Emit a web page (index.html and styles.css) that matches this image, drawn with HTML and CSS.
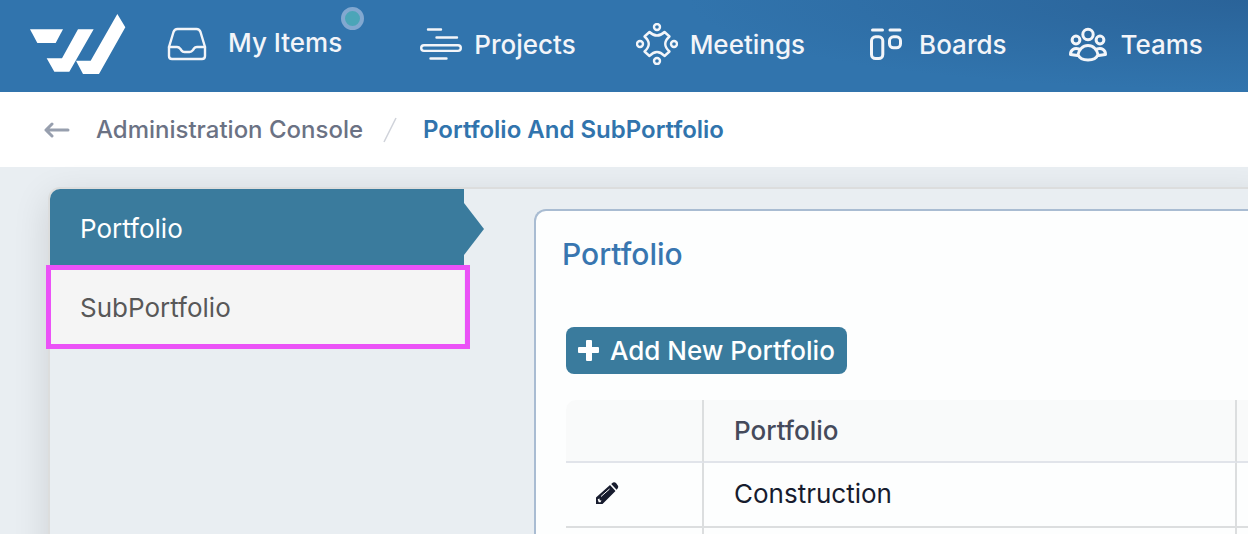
FILE: index.html
```html
<!DOCTYPE html>
<html lang="en">
<head>
    <meta charset="UTF-8">
    <meta name="viewport" content="width=device-width, initial-scale=1.0">
    <title>Portfolio And SubPortfolio</title>
    <link rel="stylesheet" href="styles.css">
</head>
<body>
    <header>
        <a href="#" class="logo" aria-label="Home">
            <svg width="96" height="60" viewBox="0 0 288 180" fill="#fff">
                <path d="M0 46H99L77 87H22Z"/>
                <path d="M144 46H191L118 173H73L50 133H96Z"/>
                <path d="M262 0L286 40L207 180H159L138 140H182Z"/>
            </svg>
        </a>
        <nav>
            <a href="#" class="nav-item my-items">
                <svg class="nav-icon" viewBox="0 0 42 42">
                    <path d="M3 24L7.500 9Q8.500 6 11.500 6H30.500Q33.500 6 34.500 9L39 24V33Q39 36 36 36H6Q3 36 3 33Z"/>
                    <path d="M3 24H11Q13 24 14.500 26L15.500 27.500Q16.500 29 18.500 29H23.500Q25.500 29 27 27L28 25.500Q29 24 31 24H39"/>
                </svg>
                <span>My Items</span>
                <span class="badge"></span>
            </a>
            <a href="#" class="nav-item">
                <svg class="nav-icon" viewBox="0 0 42 42">
                    <path d="M8 6.500H21M16.500 14.500H37M10.500 35.500H26.500"/>
                    <rect x="1.200" y="22.300" width="39.600" height="5.600" rx="2.800"/>
                </svg>
                <span>Projects</span>
            </a>
            <a href="#" class="nav-item">
                <svg class="nav-icon" viewBox="0 0 42 42">
                    <circle cx="21" cy="4" r="3"/>
                    <circle cx="4" cy="21" r="3"/>
                    <circle cx="38" cy="21" r="3"/>
                    <circle cx="21" cy="38" r="3"/>
                    <path d="M13.500 9Q21 16 28.500 9L33.500 13.500Q25 21 33.500 28.500L28.500 33Q21 25 13.500 33L8.500 28.500Q17 21 8.500 13.500Z"/>
                </svg>
                <span>Meetings</span>
            </a>
            <a href="#" class="nav-item">
                <svg class="nav-icon bold" viewBox="0 0 42 42">
                    <path d="M7.500 7H17.500M25 7H35"/>
                    <rect x="6.500" y="13.800" width="11.300" height="21.700" rx="4"/>
                    <rect x="24.500" y="13.800" width="11" height="11" rx="4"/>
                </svg>
                <span>Boards</span>
            </a>
            <a href="#" class="nav-item">
                <svg class="nav-icon bold" viewBox="0 0 42 42">
                    <circle cx="21" cy="11.500" r="5.200"/>
                    <circle cx="9" cy="17" r="3.900"/>
                    <circle cx="33" cy="17" r="3.900"/>
                    <path d="M21 22.500C26.500 22.500 30 27 31 31.500C29.500 35.500 25 37 21 37C17 37 12.500 35.500 11 31.500C12 27 15.500 22.500 21 22.500Z"/>
                    <path d="M12 26C7 24.500 3.500 27 3.500 31.500L10.500 32.500"/>
                    <path d="M30 26C35 24.500 38.500 27 38.500 31.500L31.500 32.500"/>
                </svg>
                <span>Teams</span>
            </a>
        </nav>
    </header>

    <div class="breadcrumb">
        <a href="#" class="back" aria-label="Back">
            <svg width="26" height="18" viewBox="0 0 26 18">
                <path d="M8 3L2 9L8 15M2 9H24"/>
            </svg>
        </a>
        <a href="#" class="crumb">Administration Console</a>
        <svg class="slash" width="14" height="26" viewBox="0 0 14 26">
            <path d="M1 25L13 1"/>
        </svg>
        <span class="crumb current">Portfolio And SubPortfolio</span>
    </div>

    <main class="container">
        <aside class="sidebar">
            <a href="#" class="side-item active">Portfolio</a>
            <a href="#" class="side-item highlighted">SubPortfolio</a>
        </aside>

        <section class="card">
            <h2>Portfolio</h2>
            <button type="button" class="add-button">
                <svg width="22" height="22" viewBox="0 0 22 22" fill="#fff">
                    <path d="M9 0H13Q14 0 14 1V7H20Q21 7 21 8V12Q21 13 20 13H14V20Q14 21 13 21H9Q8 21 8 20V13H1Q0 13 0 12V8Q0 7 1 7H8V1Q8 0 9 0Z"/>
                </svg>
                Add New Portfolio
            </button>
            <table>
                <thead>
                    <tr>
                        <th class="edit-col"></th>
                        <th class="name-col">Portfolio</th>
                        <th></th>
                    </tr>
                </thead>
                <tbody>
                    <tr>
                        <td>
                            <button type="button" class="edit-button" aria-label="Edit Construction">
                                <svg width="24" height="24" viewBox="0 0 24 24">
                                    <path fill="#171c2e" d="M0 22V15.500L14 3L19.500 9L6.500 22ZM15.200 2L17 .500Q18.500 -.300 20 1L21.800 3.500Q22.800 5 21.600 6.400L20.600 7.800Z"/>
                                    <path stroke="#fff" d="M5 14.500L13.500 7"/>
                                    <path fill="#fff" d="M1.700 17.200L3.500 16.500L3.700 18.300L5.500 18.600L4.500 20.300L2.700 20.300Z"/>
                                </svg>
                            </button>
                        </td>
                        <td>Construction</td>
                        <td></td>
                    </tr>
                    <tr>
                        <td></td>
                        <td></td>
                        <td></td>
                    </tr>
                </tbody>
            </table>
        </section>
    </main>
</body>
</html>
```
FILE: styles.css
```css
* {
    box-sizing: border-box;
}

body {
    margin: 0;
    height: 100vh;
    overflow: hidden;
    display: flex;
    flex-direction: column;
    font-family: Inter, sans-serif;
    font-size: 26px;
    background-color: #e9eef2;
    color: #171c2e;
}

a {
    color: inherit;
    text-decoration: none;
}

button {
    font: inherit;
    border: none;
    cursor: pointer;
}

svg {
    display: block;
    flex: none;
}

/* Top bar */
header {
    flex: none;
    height: 92px;
    padding: 0 30px;
    display: flex;
    align-items: center;
    gap: 40px;
    background: radial-gradient(ellipse 560px 90px at 100% 0, #2a6399, #3174ad);
    color: #f3f5f9;
    font-weight: 500;
}

.logo {
    margin-bottom: 4px;
}

nav {
    display: flex;
    gap: 60px;
    padding-bottom: 2px;
    white-space: nowrap;
}

.nav-item {
    display: flex;
    align-items: center;
    gap: 12px;
    padding-bottom: 2px;
}

.nav-icon {
    width: 42px;
    height: 42px;
    fill: none;
    stroke: #f3f5f9;
    stroke-width: 2.4;
    stroke-linecap: round;
    stroke-linejoin: round;
}

.nav-icon.bold {
    stroke-width: 3;
}

.my-items {
    position: relative;
    gap: 20px;
    padding-right: 18px;
}

.my-items span {
    padding-bottom: 4px;
}

.badge {
    position: absolute;
    top: -16px;
    right: -4px;
    width: 23px;
    height: 23px;
    border: 4px solid #82a8d0;
    border-radius: 50%;
    background-color: #4ba5b8;
}

/* Breadcrumb */
.breadcrumb {
    flex: none;
    height: 75px;
    padding: 0 44px;
    display: flex;
    align-items: center;
    gap: 26px;
    background-color: #fff;
}

.back svg {
    fill: none;
    stroke: #979fae;
    stroke-width: 3;
    stroke-linecap: round;
    stroke-linejoin: round;
}

.slash {
    margin-left: -6px;
    stroke: #d0d3da;
    stroke-width: 1.5;
}

.crumb {
    font-size: 24px;
    font-weight: 500;
    color: #6b7284;
}

.crumb.current {
    font-weight: 600;
    color: #3174ad;
}

/* Content */
.container {
    flex: 1 0 auto;
    margin: 20px -20px -20px 48px;
    display: flex;
    align-items: flex-start;
    gap: 70px;
    border: 2px solid #dcdddd;
    border-radius: 12px;
    background-color: #e9eef2;
    box-shadow: 0 10px 36px rgba(0, 0, 0, 0.12);
}

.sidebar {
    flex: 0 0 414px;
}

.side-item {
    position: relative;
    display: flex;
    align-items: center;
    height: 79px;
    padding: 0 30px;
    background-color: #f5f5f5;
    color: #585858;
}

.side-item.active {
    border-top-left-radius: 10px;
    background-color: #3a7b9d;
    color: #fff;
}

.side-item.active::after {
    content: "";
    position: absolute;
    top: 14px;
    left: 100%;
    border: 26px solid transparent;
    border-left: 20px solid #3a7b9d;
    border-right: none;
}

.side-item.highlighted::after {
    content: "";
    position: absolute;
    inset: -3px -6px -2px -4px;
    border: 5px solid #eb52f7;
}

.card {
    flex: 1;
    min-width: 0;
    margin-top: 20px;
    padding: 25px 0 0 30px;
    border: 2px solid #a9bcd2;
    border-right: none;
    border-top-left-radius: 12px;
    background-color: #fdfefe;
}

h2 {
    margin: 0 0 55px -4px;
    font-size: 30px;
    font-weight: 500;
    line-height: 36px;
    color: #3876b0;
}

.add-button {
    display: flex;
    align-items: center;
    gap: 10px;
    height: 47px;
    margin-bottom: 26px;
    padding: 0 12px;
    border-radius: 8px;
    background-color: #3a7b9d;
    color: #fff;
    font-weight: 500;
}

table {
    width: 100%;
    table-layout: fixed;
    border-collapse: separate;
    border-spacing: 0;
}

th, td {
    height: 65px;
    padding: 0 30px 2px;
    border-right: 2px solid #dcdedf;
    border-bottom: 2px solid #dcdedf;
    text-align: left;
}

th {
    height: 63px;
    padding-bottom: 0;
    border-bottom-color: #e1e4ea;
    background-color: #f9fafa;
    color: #454a5b;
    font-weight: 500;
}

th:first-child {
    border-top-left-radius: 10px;
}

.edit-col {
    width: 138px;
}

.name-col {
    width: 533px;
}

.edit-button {
    display: block;
    padding: 0;
    background: none;
}
```
